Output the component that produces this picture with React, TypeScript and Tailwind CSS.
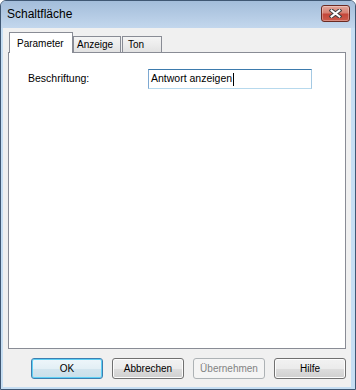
function CloseIcon() {
  return (
    <svg width="13" height="9" viewBox="0 0 13 9">
      <path d="M2.5 1.5 L10.5 7.5 M10.5 1.5 L2.5 7.5" stroke="#3e3e3e" strokeWidth="4" strokeLinecap="square" fill="none" />
      <path d="M2.5 1.5 L10.5 7.5 M10.5 1.5 L2.5 7.5" stroke="#ffffff" strokeWidth="2" strokeLinecap="square" fill="none" />
    </svg>
  )
}

function TitleBar() {
  return (
    <div className="h-[27px] flex items-center justify-between pl-[6px] pr-[5px] bg-[linear-gradient(#a3bdda,#c3d7ed)]">
      <span className="text-[12px] leading-none pb-[1px]">Schaltfläche</span>
      <button className="w-[29px] h-[17px] -mt-[2px] flex items-center justify-center rounded-[3px] border border-[#6b2a22] bg-[linear-gradient(#e3a79b_0%,#d68173_45%,#c4473a_55%,#cb5c4c_100%)] shadow-[inset_0_0_0_1px_rgba(255,255,255,0.3)]">
        <CloseIcon />
      </button>
    </div>
  )
}

function Tab({ label, active, width, pad }: { label: string, active?: boolean, width: string, pad: string }) {
  if (active)
    return (
      <div className={`${width} ${pad} h-[21px] -mb-px relative z-10 border border-b-0 border-[#898c95] bg-white text-[10px] leading-none pt-[6px]`}>
        {label}
      </div>
    )
  return (
    <div className={`${width} ${pad} h-[16px] border border-b-0 border-[#898c95] bg-[linear-gradient(#f4f4f4_0%,#ececec_50%,#e2e2e2_100%)] text-[10px] leading-none pt-[3px]`}>
      {label}
    </div>
  )
}

function Button({ label, kind }: { label: string, kind?: "default" | "disabled" }) {
  if (kind === "default")
    return (
      <button className="w-[72px] h-[21px] rounded-[3px] border border-[#3c7fb1] bg-[linear-gradient(#eef6fa_0%,#e3eff5_50%,#d3e5ee_51%,#c9dfea_100%)] shadow-[inset_0_0_0_1px_#5fd0f5] text-[10px]">
        {label}
      </button>
    )
  if (kind === "disabled")
    return (
      <button className="w-[72px] h-[21px] rounded-[3px] border border-[#adb2b5] bg-[#f4f4f4] text-[#838383] text-[10px]">
        {label}
      </button>
    )
  return (
    <button className="w-[72px] h-[21px] rounded-[3px] border border-[#707070] bg-[linear-gradient(#f2f2f2_0%,#ebebeb_50%,#dddddd_51%,#cfcfcf_100%)] shadow-[inset_0_0_0_1px_#fcfcfc] text-[10px]">
      {label}
    </button>
  )
}

export default function App() {
  return (
    <div className="w-[356px] h-[390px] flex flex-col overflow-hidden border border-[#3f5773] rounded-t-[6px] bg-[#c2d8ee] text-black font-['Liberation_Sans',Arial,sans-serif]">
      <TitleBar />
      <div className="flex flex-1">
        <div className="w-[2px] bg-[#c6def3]" />
        <div className="flex-1 flex flex-col bg-[#f0f0f0] px-[5px] pt-[4px] pb-[8px]">
          <div className="h-[20px] flex items-end pl-[1px]">
            <Tab label="Parameter" active width="w-[64px]" pad="pl-[7px]" />
            <Tab label="Anzeige" width="w-[48px]" pad="pl-[3px]" />
            <div className="w-[1px]" />
            <Tab label="Ton" width="w-[40px]" pad="pl-[5px]" />
          </div>
          <div className="flex-1 border border-[#898c95] bg-white pt-[16px]">
            <div className="flex items-center">
              <div className="w-[139px] pl-[19px] text-[10.5px]">Beschriftung:</div>
              <div className="w-[164px] h-[20px] flex items-center pl-[2px] border border-t-[#3d7bad] border-l-[#7ea9d2] border-r-[#a4c9e3] border-b-[#b7d9ed] text-[10.5px]">
                <span>Antwort anzeigen</span>
                <span className="w-px h-[13px] bg-black ml-[1px]" />
              </div>
            </div>
          </div>
          <div className="mt-[9px] flex justify-end gap-[9px]">
            <Button label="OK" kind="default" />
            <Button label="Abbrechen" />
            <Button label="Übernehmen" kind="disabled" />
            <Button label="Hilfe" />
          </div>
        </div>
        <div className="w-[4px] bg-[#c6def3]" />
      </div>
      <div className="h-[2px] bg-[#c6def3]" />
    </div>
  )
}
